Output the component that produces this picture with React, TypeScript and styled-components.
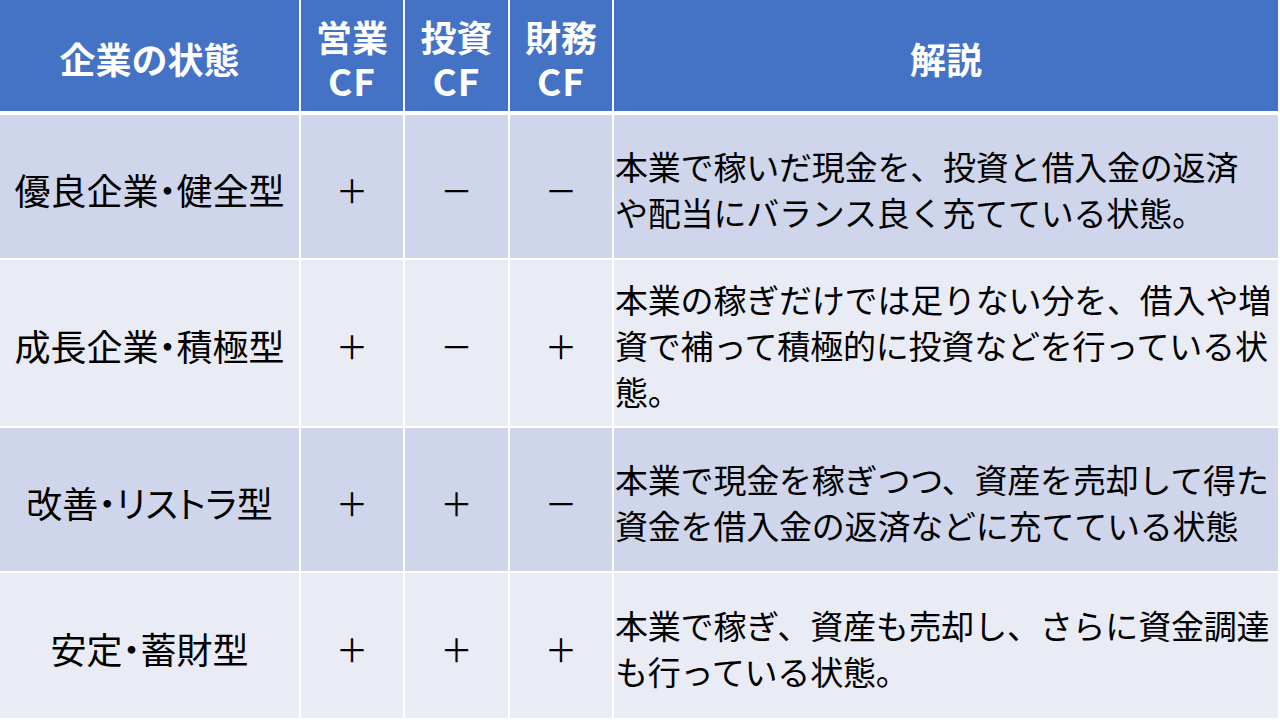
import React from 'react';
import styled, {createGlobalStyle} from 'styled-components';

const GlobalStyle = createGlobalStyle`
  html, body {
    margin: 0;
    padding: 0;
    background: #ffffff;
  }
  body {
    font-family: "Noto Sans CJK JP", "Noto Sans", sans-serif;
  }
`;

const Table = styled.div`
  width: 1280px;
  height: 720px;
  box-sizing: border-box;
  padding-right: 2px;
  background: #ffffff;
  display: grid;
  grid-template-columns: 299px 102px 103px 102px 1fr;
  grid-template-rows: 113px 143px 166px 143px 145px;
  column-gap: 2px;
  row-gap: 2px;
  color: #000000;
`;

const HeadCell = styled.div`
  background: #4472c4;
  color: #ffffff;
  font-weight: 700;
  font-size: 36px;
  line-height: 44px;
  margin-bottom: 2px;
  padding-top: 4px;
  display: flex;
  flex-direction: column;
  align-items: center;
  justify-content: center;
  text-align: center;
  white-space: nowrap;

  > .cf {
    font-size: 37px;
    letter-spacing: 1px;
  }
`;

const Cell = styled.div<{ $odd: boolean; $align?: 'center' | 'left' }>`
  background: ${p => (p.$odd ? '#cfd5ea' : '#e9ebf5')};
  display: flex;
  align-items: center;
  justify-content: ${p => (p.$align === 'left' ? 'flex-start' : 'center')};
  font-size: 34px;
  line-height: 46px;
  white-space: nowrap;
  padding-top: 4px;
`;

const StateName = styled.span`
  font-size: 36px;
  font-feature-settings: "palt";
`;

const Description = styled.div`
  font-size: 33px;
  line-height: 46px;
  padding-left: 1px;
  letter-spacing: -0.2px;
`;

const Sign = styled.span`
  font-size: 32px;
  font-weight: 400;
`;

interface Row {
  state: string;
  op: string;
  inv: string;
  fin: string;
  lines: string[];
}

const rows: Row[] = [
  {
    state: '優良企業・健全型',
    op: '＋',
    inv: '－',
    fin: '－',
    lines: ['本業で稼いだ現金を、投資と借入金の返済', 'や配当にバランス良く充てている状態。'],
  },
  {
    state: '成長企業・積極型',
    op: '＋',
    inv: '－',
    fin: '＋',
    lines: ['本業の稼ぎだけでは足りない分を、借入や増', '資で補って積極的に投資などを行っている状', '態。'],
  },
  {
    state: '改善・リストラ型',
    op: '＋',
    inv: '＋',
    fin: '－',
    lines: ['本業で現金を稼ぎつつ、資産を売却して得た', '資金を借入金の返済などに充てている状態'],
  },
  {
    state: '安定・蓄財型',
    op: '＋',
    inv: '＋',
    fin: '＋',
    lines: ['本業で稼ぎ、資産も売却し、さらに資金調達', 'も行っている状態。'],
  },
];

const App: React.FC = () => {
  return (
    <>
      <GlobalStyle/>
      <Table>
        <HeadCell>企業の状態</HeadCell>
        <HeadCell><span>営業</span><span className="cf">CF</span></HeadCell>
        <HeadCell><span>投資</span><span className="cf">CF</span></HeadCell>
        <HeadCell><span>財務</span><span className="cf">CF</span></HeadCell>
        <HeadCell>解説</HeadCell>
        {rows.map((r, i) => {
          const odd = i % 2 === 0;
          return (
            <React.Fragment key={r.state}>
              <Cell $odd={odd}><StateName>{r.state}</StateName></Cell>
              <Cell $odd={odd}><Sign>{r.op}</Sign></Cell>
              <Cell $odd={odd}><Sign>{r.inv}</Sign></Cell>
              <Cell $odd={odd}><Sign>{r.fin}</Sign></Cell>
              <Cell $odd={odd} $align="left">
                <Description>
                  {r.lines.map(l => <div key={l}>{l}</div>)}
                </Description>
              </Cell>
            </React.Fragment>
          );
        })}
      </Table>
    </>
  );
};

export default App;
